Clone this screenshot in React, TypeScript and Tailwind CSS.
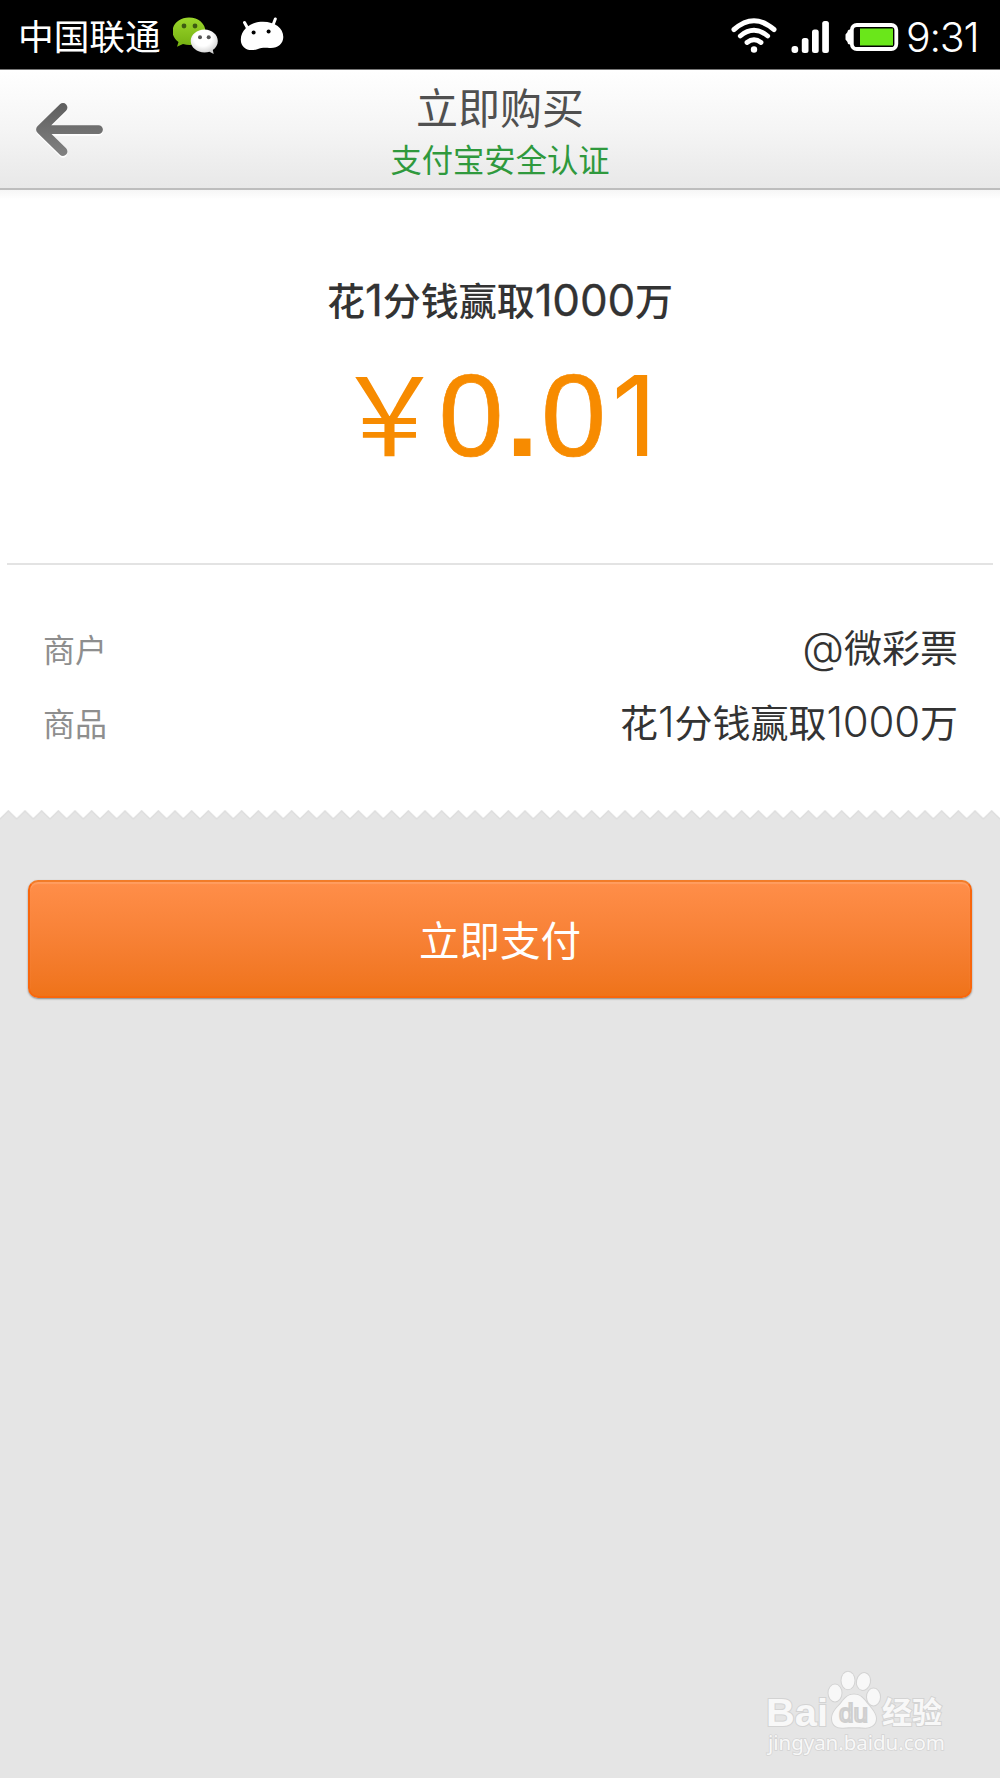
import React from "react";

const CJK = "font-['Noto_Sans_CJK_SC',sans-serif]";

function StatusBar() {
  return (
    <div className="flex h-[69px] items-center bg-black text-white">
      <span className={`${CJK} ml-[18px] w-[155px] whitespace-nowrap text-[35.700px] leading-[66px] font-normal`}>中国联通</span>
      <svg className="mt-[3px] h-[40px] w-[46px]" viewBox="173 16 46 40">
        <defs>
          <linearGradient id="g" x1="0" y1="0" x2="0" y2="1">
            <stop offset="0" stopColor="#9bd62b" />
            <stop offset="1" stopColor="#74b011" />
          </linearGradient>
          <radialGradient id="w" cx=".45" cy=".35" r=".65">
            <stop offset=".5" stopColor="#fff" />
            <stop offset="1" stopColor="#cfcfcf" />
          </radialGradient>
        </defs>
        <path d="M189 17.500c-9.300 0-16.500 6.200-16.500 14 0 4.300 2.400 8 6 10.500l-1.500 4.700 6-2.800c11 3.500 22.500-2 22.500-12.400 0-7.800-7.200-14-16.500-14Z" fill="url(#g)" />
        <path d="M204.500 29.500c-7.500 0-13.800 5.200-13.800 11.500s6.300 11.500 13.800 11.500c1.800 0 3.500-.3 5-.8l4.200 2.400-.9-4c3.200-2.200 5-5.500 5-9.100 0-6.300-5.800-11.500-13.300-11.500Z" fill="url(#w)" />
        <g fill="#3e5b12"><circle cx="184" cy="26" r="2.400" /><circle cx="195" cy="26" r="2.400" /></g>
        <g fill="#555"><circle cx="200" cy="37.300" r="2" /><circle cx="208.700" cy="37.300" r="2" /></g>
      </svg>
      <svg className="ml-[20px] mt-px h-[36px] w-[46px]" viewBox="239 17 46 36">
        <path d="M246 28c4-4 10-6.300 17-6.300 12 0 20.300 6.300 20.300 15.300 0 7-6 11.700-14 11-5-.4-8-.2-12 1.200-9 2.800-16.500-1-16.500-9.700 0-4.500 2-8.500 5.200-11.500Z" fill="#fff" />
        <path d="m244.500 22.500 3.300 6M275.300 19l-2.300 6" stroke="#fff" strokeWidth="3" strokeLinecap="round" />
        <circle cx="253.600" cy="32.500" r="2" /><circle cx="268.600" cy="31.500" r="2" />
      </svg>
      <div className="ml-auto flex items-center">
        <svg className="mt-[3px] h-[38px] w-[48px]" viewBox="730 17 48 38" fill="none" stroke="#fff" strokeLinecap="round">
          <path d="M734 29.500Q754 12 774 29.500" strokeWidth="5" />
          <path d="M740.300 36Q754 24.500 767.700 36" strokeWidth="4.800" />
          <path d="M747 42.500Q754 37 761 42.500" strokeWidth="4.800" />
          <circle cx="754" cy="49.500" r="3.200" fill="#fff" stroke="none" />
        </svg>
        <svg className="ml-[12px] mt-[5px] h-[34px] w-[40px]" viewBox="790 20 40 34" fill="#fff">
          <rect x="791.500" y="46" width="6.700" height="7" rx="3" />
          <rect x="801.800" y="38" width="6.700" height="15" rx="2.500" />
          <rect x="812" y="29.500" width="6.700" height="23.500" rx="2.500" />
          <rect x="822.200" y="21" width="6.700" height="32" rx="2.500" />
        </svg>
        <svg className="ml-[14px] mt-[5px] h-[30px] w-[56px]" viewBox="844 22 56 30">
          <path d="M851 29.500h-1a2.500 2.500 0 0 0-2.500 2.500l-2 2.500v5l2 2.500a2.500 2.500 0 0 0 2.500 2.500H851Z" fill="#fff" />
          <rect x="851.800" y="25" width="44.500" height="24" rx="5" fill="#000" stroke="#fff" strokeWidth="3.800" />
          <rect x="860" y="28.500" width="33" height="17" fill="#6ae71a" />
        </svg>
        <span className="ml-[6px] mr-[18px] mt-[5px] block w-[76px] whitespace-nowrap font-['Inter',sans-serif] text-[41px] font-light leading-[64px] tracking-[-1.200px]">9:31</span>
      </div>
    </div>
  );
}

function Header() {
  return (
    <div className="relative h-[121px] border-t border-[#777] border-b-[2px] border-b-[#bdbdbd] bg-linear-to-b from-white via-[#f5f5f5] to-[#e8e8e8]">
      <svg className="absolute left-[34px] top-[31px] h-[58px] w-[72px]" viewBox="34 101 72 58" fill="none" strokeLinecap="round" strokeLinejoin="round">
        <defs>
          <linearGradient id="a" gradientUnits="userSpaceOnUse" x1="0" y1="102" x2="0" y2="156">
            <stop offset="0" stopColor="#5d5d5d" />
            <stop offset="1" stopColor="#828282" />
          </linearGradient>
        </defs>
        <path d="M63 109.500 40.500 131.500 63 153.500M42 131.500H98.500" stroke="#fff" strokeWidth="8.500" />
        <path d="M63 107.500 40.500 129.500 63 151.500M42 129.600H98.500" stroke="url(#a)" strokeWidth="8.800" />
      </svg>
      <div className={`${CJK} flex flex-col items-center`}>
        <h1 className="mt-[11px] h-[50px] text-[42px] leading-[50px] text-[#505050]">立即购买</h1>
        <p className="mt-[8px] h-[40px] text-[31.300px] leading-[40px] text-[#2f993d]">支付宝安全认证</p>
      </div>
    </div>
  );
}

function Digits({ children, light }: { children: string; light?: boolean }) {
  return (
    <span
      className={
        light
          ? "mt-[3px] font-['Inter',sans-serif] text-[42px] font-light tracking-[-0.200px]"
          : "mt-px font-['Inter',sans-serif] text-[44px] font-normal tracking-[-0.200px] [-webkit-text-stroke:0.300px_#333]"
      }
    >
      {children}
    </span>
  );
}

function Details() {
  return (
    <dl className={`${CJK} ml-[43px] mr-[42px] mt-[46px]`}>
      <div className="flex h-[74px] items-center justify-between">
        <dt className="text-[32px] text-[#8e8e8e]">商户</dt>
        <dd className="mb-[4px] flex items-center text-[38px] leading-[60px] text-[#333]">
          <span className="mt-px font-['Inter',sans-serif] text-[43px] font-light">@</span>微彩票
        </dd>
      </div>
      <div className="flex h-[74px] items-center justify-between">
        <dt className="text-[32px] text-[#8e8e8e]">商品</dt>
        <dd className="mb-[3px] flex items-center text-[38px] leading-[60px] text-[#333]">
          花<Digits light>1</Digits>分钱赢取<Digits light>1000</Digits>万
        </dd>
      </div>
    </dl>
  );
}

function Watermark() {
  return (
    <svg className="absolute bottom-[20px] right-[40px] h-[92px] w-[200px]" viewBox="760 1666 200 92">
      <g fill="#f8f8f8" stroke="#d3d3d3" strokeWidth="2" paintOrder="stroke">
        <text x="766" y="1726" fontFamily="Liberation Sans" fontWeight="700" fontSize="39" textLength="62" lengthAdjust="spacingAndGlyphs">Bai</text>
        <ellipse cx="835" cy="1693" rx="6.500" ry="8.500" />
        <ellipse cx="848" cy="1680.500" rx="6.500" ry="8.800" />
        <ellipse cx="863.500" cy="1681.500" rx="6.500" ry="8.500" transform="rotate(12 863.500 1681.500)" />
        <ellipse cx="873.500" cy="1697" rx="6.500" ry="8.500" />
        <path d="M854 1694.500c-7 0-10 5-14 10-5 5-8 9-8 14 0 7 5 9.500 11 9.200 8-.5 14-.5 22 0 6 .3 11-3 11-9.200 0-5-4-9-8-14-4-5-7-10-14-10Z" />
        <text x="882" y="1723" fontFamily="Noto Sans CJK SC" fontWeight="700" fontSize="30">经验</text>
        <text x="768" y="1750" fontFamily="Noto Sans" fontSize="20.500" strokeWidth="1.500" textLength="177">jingyan.baidu.com</text>
      </g>
      <text x="839" y="1722" fontFamily="Liberation Sans" fontSize="26" fill="#f8f8f8" stroke="#cfcfcf" strokeWidth="2" textLength="29" lengthAdjust="spacingAndGlyphs">du</text>
    </svg>
  );
}

export default function App() {
  return (
    <main className="relative h-[1778px] w-[1000px] overflow-hidden bg-[#e5e5e5]">
      <StatusBar />
      <Header />
      <section className="h-[620px] bg-linear-to-b from-[#f6f6f6] via-white via-[1.500%] to-white">
        <div className={`${CJK} flex h-[373px] flex-col items-center`}>
          <h2 className="mt-[79px] flex h-[60px] items-center text-[38px] font-medium leading-[60px] text-[#333]">
            花<Digits>1</Digits>分钱赢取<Digits>1000</Digits>万
          </h2>
          <p className="mt-[22px] flex h-[130px] w-[313px] items-center font-['Liberation_Sans',sans-serif] text-[117px] leading-[130px] text-[#f78b00]">
            <span className={`${CJK} mb-[14px] flex w-[92px] shrink-0 justify-center text-[109px]`}>{"\uFFE5"}</span>
            <span className="ml-[3px] tracking-[2.500px] [-webkit-text-stroke:0.700px_#f78b00]">0<b className="[-webkit-text-stroke:0]">.</b>0</span>
            <span className="ml-[3px] font-['Inter',sans-serif] text-[111px]">1</span>
          </p>
        </div>
        <hr className="mx-[7px] h-[2px] border-0 bg-[#e3e3e3]" />
        <Details />
      </section>
      <svg className="block h-[20px] w-[1000px]" viewBox="0 0 1000 20">
        <defs>
          <pattern id="teeth" width="16.667" height="20" patternUnits="userSpaceOnUse">
            <path d="M0 0H16.667V9L8.333 0 0 9Z" fill="#fff" />
            <path d="M-1 10 8.333 1 17.667 10" stroke="#dedede" strokeWidth="1.500" fill="none" />
          </pattern>
        </defs>
        <rect width="1000" height="20" fill="url(#teeth)" />
      </svg>
      <button className={`${CJK} mx-[28px] mt-[50px] block h-[118px] w-[944px] rounded-[10px] border-2 border-[#f8660c] border-t-[#f27c28] bg-linear-to-b from-[#ff8e49] to-[#ef7319] text-[40.500px] text-white shadow-[0_1px_2px_#888,inset_0_2px_1px_#ff9d60]`}>
        立即支付
      </button>
      <Watermark />
    </main>
  );
}
